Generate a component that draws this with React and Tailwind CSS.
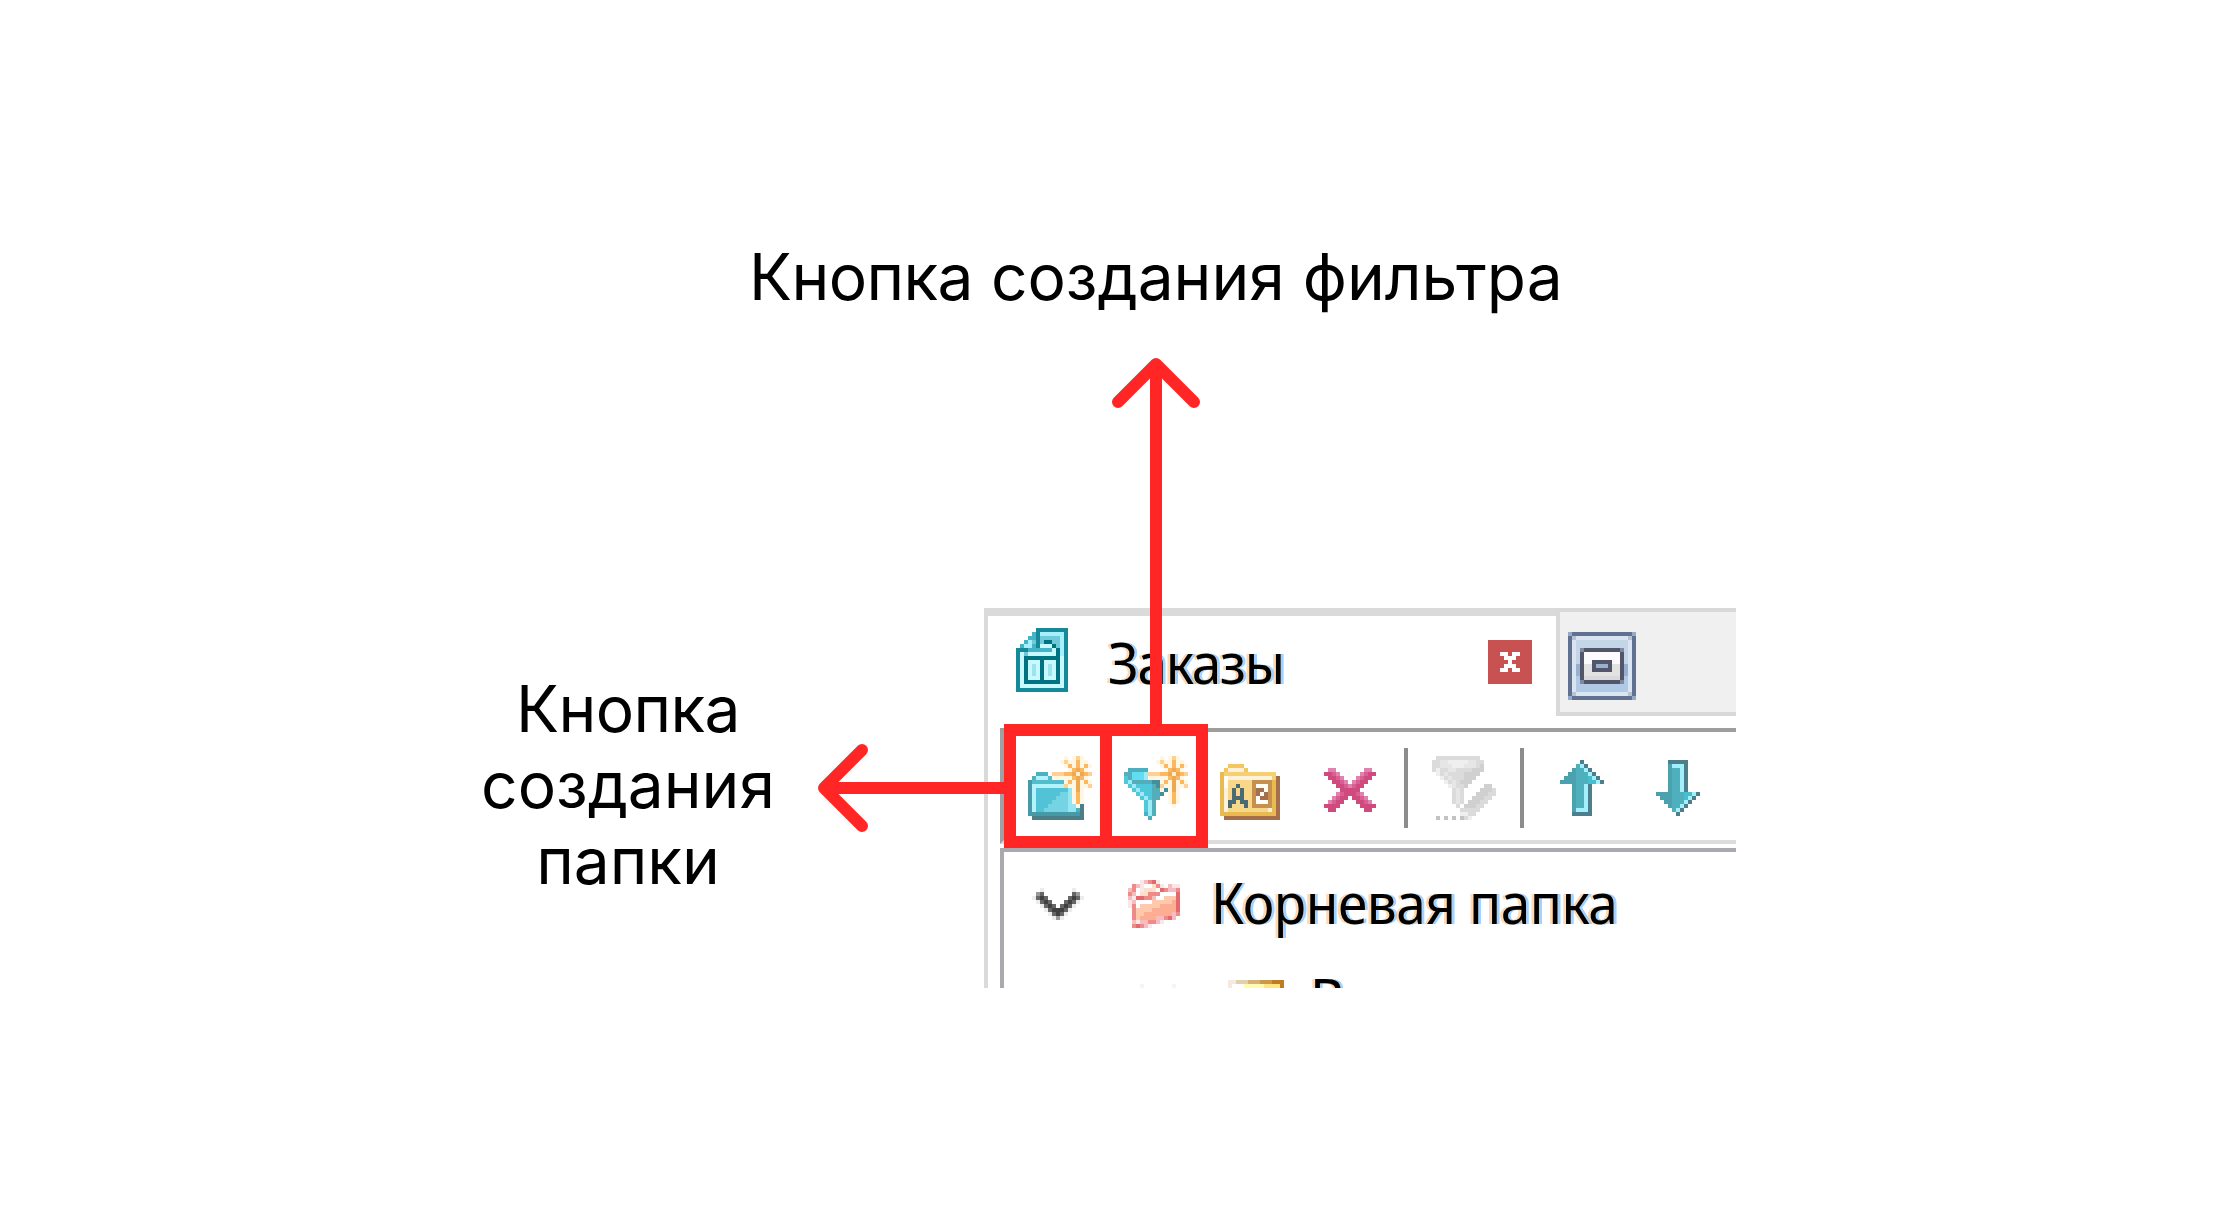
import React from "react";

const STAR = {
  c: "#fff7e4", p: "#ffcf94", o: "#fdb75e", k: "#eda94f", w: "#fdebd5",
};

const DOCUMENT = {
  palette: { D: "#14899a", F: "#007382", L: "#c8f9fe", l: "#a6f0fd", m: "#45b3c6", s: "#6fcad8", i: "#9ae4ef" },
  rows: [
    ".....DDDDDDDD",
    "....mDllllllD",
    "...mmDssssslD",
    "..mlsDsFFsslD",
    ".mllmDLLLFslD",
    "DDDmmmmmmLFlD",
    "DLsLLLLLLLFlD",
    "DLFFFFFFFFFLD",
    "DLFLLLFLLLFLD",
    "DLFLiLFLiLFLD",
    "DLFLiLFLiLFLD",
    "DLFLiLFLiLFLD",
    "DLFLLLFLLLFLD",
    "DLFFFFFFFFFLD",
    "DLLLLLLLLLLLD",
    "DDDDDDDDDDDDD",
  ],
};

const NEW_FOLDER = {
  palette: { ...STAR, D: "#4799a5", T: "#4bb1c0", s: "#52bdce", l: "#b2f3fe", b: "#52c2d7", a: "#74d4e3", h: "#94e6f2", E: "#4c7e88" },
  rows: [
    ".........c.cpc..",
    "........cpccocc.",
    ".........cocococ",
    "..........cokoc.",
    "..TTT.pppookwkop",
    ".Tlllscccccokoc.",
    "Dsssssssscockcoc",
    "Dllllllllpcckccp",
    "Dlbbbbbbbbhckc..",
    "Dlbbbbbbaahcoc..",
    "Dlbbbbbaaahcoc..",
    "Dlbbbbaaaahcoc..",
    "DlbbbaaaaahhcE..",
    "DlbbaaaaaahhTE..",
    "DDDDDDDDDDDDDE..",
    ".EEEEEEEEEEEEE..",
  ],
};

const NEW_FILTER = {
  palette: { ...STAR, T: "#4bafbf", m: "#52b0c0", g: "#56adba", a: "#62dcf0", l: "#9cecf8", b: "#4fc8dc", E: "#438f9d" },
  rows: [
    ".........c.cpc..",
    "........cpccocc.",
    ".........cocococ",
    ".TTTTT....cokoc.",
    "mgaaalpppookwkop",
    "bgaaalcccccokoc.",
    "blgggggEEcockcoc",
    ".blbbbbgEpcckccp",
    "..blbbbggcEckc..",
    "...blbbggE.coc..",
    "....blbgg..coc..",
    ".....blg...coc..",
    ".....blg....c...",
    ".....blg........",
    ".....TlT........",
    "......T.........",
  ],
};

const RENAME_FOLDER = {
  palette: { t: "#f3c75e", Y: "#e9ba4f", U: "#f5d070", w: "#fdf1da", y: "#f8d888", B: "#a56f4c", n: "#c69150", N: "#a56f4c", d: "#4a6a74", x: "#fffdf5" },
  rows: [
    "..tttt.........",
    ".twwwwt........",
    "YUUUUUUUUUUUUU.",
    "YxwwwwwwwwwwwUB",
    "YxyyyyyynnnnnYB",
    "YxyydyyynxxxnYB",
    "YwydydyynNNxnYB",
    "YwydydyynNxNnYB",
    "YwydddyynxNNnYB",
    "YwddyddynxxxnYB",
    "YwdyyydynnnnnYB",
    "YwyyyyyyyyyywYB",
    "YYYYYYYYYYYYYYB",
    ".BBBBBBBBBBBBBB",
  ],
};

const CROSS = {
  palette: { D: "#d04a7e", m: "#d85f92", h: "#e182ae" },
  rows: [
    ".hh.......hh.",
    "DDmh.....hmDD",
    ".DDmh...hmDD.",
    "..DDmh.hmDD..",
    "...DDmhmDD...",
    "....DDDDD....",
    "...hmDDDmh...",
    "..hmDD.DDmh..",
    ".hmDD...DDmh.",
    "DDDD.....DDDD",
    ".DD.......DD.",
  ],
};

const EDIT_FILTER = {
  palette: { q: "#dbdbdb", e: "#e6e6e6", f: "#efefef", d: "#d0d0d0", k: "#c3c3c3" },
  rows: [
    ".qqqqqqqqqqq....",
    "qqeefffffeeqq...",
    "qqeeefffeeeqd...",
    "qfqqeeqqqqddd...",
    ".fqeqqqqdddd....",
    "..fqeqqqddd.....",
    "...fqeqddd......",
    "....feqqd....dd.",
    ".....qeq....dddq",
    ".....qeq...dddqq",
    ".....qeq..dddqq.",
    ".....qeq.dddqq..",
    "......q.dddqq...",
    ".......qqqqq....",
    ".......ffqq.....",
    ".k.k.k.kqf......",
  ],
};

const ARROW_PALETTE = { T: "#4fb0bd", t: "#4ba1ad", E: "#4b7f8b", l: "#a3effb", b: "#47bdd2" };

const UP = {
  palette: ARROW_PALETTE,
  rows: [
    ".....E.....",
    "....TlE....",
    "...tTTlE...",
    "..ttTTTlE..",
    ".tttTTTblE.",
    "ttttTTTbblE",
    "...tTTlE...",
    "...tTTlE...",
    "...tTTlE...",
    "...tTTlE...",
    "...tTTlE...",
    "...tTTlE...",
    "...tlllE...",
    "...EEEEE...",
  ],
};

const DOWN = {
  palette: ARROW_PALETTE,
  rows: [
    "...EEEEE...",
    "...tlllE...",
    "...tTTlE...",
    "...tTTlE...",
    "...tTTlE...",
    "...tTTlE...",
    "...tTTlE...",
    "...tTTlE...",
    "ttttTTTbblE",
    ".tttTTTblE.",
    "..ttTTTlE..",
    "...tTTlE...",
    "....TlE....",
    ".....E.....",
  ],
};

const WINDOW = {
  palette: { O: "#60728f", o: "#92abc9", w: "#dbe5f2", v: "#b8c2d2", a: "#c4d5e8", m: "#98b0cf", b: "#b0cae6", K: "#53566a", k: "#7e899d", x: "#fbfbfd", y: "#e2e2e2", z: "#d9d9d9", c: "#97b1cf" },
  rows: [
    "oOOOOOOOOOOOOOOOo",
    "OvwwwwwwwwwwwwwvO",
    "OwaaaaaaaaaaaaawO",
    "OwaaaaaaaaaaaaawO",
    "OwakKKKKKKKKKkawO",
    "OwaKxxxxxxxxxKawO",
    "OwaKxxxxxxxxxKawO",
    "OwaKxxKKKKKxxKawO",
    "OwmKyyKcccKyyKmwO",
    "OwmKyyKKKKKyyKmwO",
    "OwmKyyyyyyyyyKmwO",
    "OwbKzzzzzzzzzKbwO",
    "OwbkKKKKKKKKKkbwO",
    "OwbbbbbbbbbbbbbwO",
    "OwbbbbbbbbbbbbbwO",
    "OvwwwwwwwwwwwwwvO",
    "oOOOOOOOOOOOOOOOo",
  ],
};

const CLOSE = {
  palette: { X: "#ffffff" },
  rows: ["XX.XX", ".XXX.", "..X..", ".XXX.", "XX.XX"],
};

const ROOT_FOLDER = {
  palette: { D: "#e5686f", m: "#ee8a88", p: "#f5bcc2", c: "#fbe6e8", o: "#ffc9ae", q: "#fdae92", w: "#ffffff", y: "#fde0cc" },
  rows: [
    "...cpmDc.....",
    ".mpcwwymc.pcc",
    "pmwcyyywDmppm",
    "mpwyymmmwwwwD",
    "pcDDmmpwwoooD",
    "cpwwwwoooooqD",
    "cmwoooooqqqqD",
    ".mooooqqqqqqD",
    ".mooqqqqqqqpm",
    ".moqqqqppmDp.",
    ".pcppmmpc....",
    ".mDmpc.......",
  ],
};

const CHEVRON = {
  palette: { c: "#ececec", g: "#9a9a9a", k: "#666666", K: "#404040" },
  rows: [
    "..c.......c..",
    ".gk.......kg.",
    "ckKk.....kKkc",
    ".ckKk...kKkc.",
    "..ckKk.kKkc..",
    "...ckKKKkc...",
    "....ckKkc....",
    ".....cgc.....",
  ],
};

const CHILD_CHEVRON = { palette: { c: "#f5f5f5" }, rows: [".........", "c.......c"] };

const CHILD_FOLDER = {
  palette: { a: "#f3ebe0", b: "#e3cfae", c: "#d5b27c", d: "#c99a4c", e: "#be7d25", w: "#ffffff", x: "#fffbb0", y: "#ffe681" },
  rows: ["aabbbcccdddeee", "awwwxxxxxyyyye"],
};

function Sprite({ art, className = "" }) {
  const cols = art.rows[0].length;
  const cells = [];
  art.rows.forEach((row, y) => {
    let x = 0;
    while (x < row.length) {
      let end = x + 1;
      while (end < row.length && row[end] === row[x]) end += 1;
      if (row[x] !== ".") {
        cells.push(<rect key={`${x}-${y}`} x={x} y={y} width={end - x} height={1} fill={art.palette[row[x]]} />);
      }
      x = end;
    }
  });
  return (
    <svg
      className={`block shrink-0 ${className}`}
      width={cols * 4}
      height={art.rows.length * 4}
      viewBox={`0 0 ${cols} ${art.rows.length}`}
      shapeRendering="crispEdges"
    >
      {cells}
    </svg>
  );
}

const UI_TEXT =
  "block origin-left scale-x-95 whitespace-pre text-[56px] leading-[64px] text-black font-['Noto_Sans',sans-serif] [text-shadow:-3px_0_0_#ffb46480,3px_0_0_#64b4ff99]";

function TabBar() {
  return (
    <div className="flex h-[108px]">
      <div className="flex h-[108px] w-[568px] items-start border-t-8 border-[#dadada] bg-white">
        <Sprite art={DOCUMENT} className="mt-3 ml-7" />
        <span className={`${UI_TEXT} mt-[14px] ml-[40px] w-[380px] tracking-[-1.3px]`}>Заказы</span>
        <button className="mt-6 flex size-11 shrink-0 items-center justify-center bg-[#c85151]">
          <Sprite art={CLOSE} />
        </button>
      </div>
      <div className="h-[108px] w-[180px] border-4 border-r-0 border-[#d9d9d9] bg-[#f0f0f0]">
        <Sprite art={WINDOW} className="mt-5 ml-2" />
      </div>
    </div>
  );
}

function Toolbar() {
  return (
    <div className="mt-3 ml-3 flex h-[116px] items-start border-t-4 border-b-4 border-l-4 border-t-[#9d9d9d] border-b-[#dcdcdc] border-l-[#a0a0a0]">
      <Sprite art={NEW_FOLDER} className="mt-6 ml-6" />
      <Sprite art={NEW_FILTER} className="mt-6 ml-8" />
      <Sprite art={RENAME_FOLDER} className="mt-8 ml-8" />
      <Sprite art={CROSS} className="mt-9 ml-11" />
      <div className="mt-4 ml-7 h-20 w-1 shrink-0 bg-[#8c8c8c]" />
      <Sprite art={EDIT_FILTER} className="mt-6 ml-6" />
      <div className="mt-4 ml-6 h-20 w-1 shrink-0 bg-[#8c8c8c]" />
      <Sprite art={UP} className="mt-7 ml-9" />
      <Sprite art={DOWN} className="mt-7 ml-[52px]" />
    </div>
  );
}

function Tree() {
  return (
    <div className="mt-1 ml-3 h-[140px] overflow-hidden border-t-4 border-l-4 border-[#aaa9b0]">
      <div className="flex h-24 items-start">
        <Sprite art={CHEVRON} className="mt-9 ml-7" />
        <Sprite art={ROOT_FOLDER} className="mt-7 ml-11" />
        <span className={`${UI_TEXT} mt-[18px] ml-[31px] tracking-[-0.5px]`}>Корневая папка</span>
      </div>
      <div className="flex items-start">
        <Sprite art={CHILD_CHEVRON} className="mt-8 ml-[136px]" />
        <Sprite art={CHILD_FOLDER} className="mt-8 ml-[52px]" />
        <span className={`${UI_TEXT} mt-[18px] ml-[26px]`}>В</span>
      </div>
    </div>
  );
}

function Callouts() {
  return (
    <>
      <svg
        className="absolute top-0 left-0"
        width="2216"
        height="1228"
        fill="none"
        stroke="#ff2625"
        strokeWidth="12"
        strokeLinejoin="round"
      >
        <path d="M1156 724V366M1004 788H824" />
        <path d="M1118 402L1156 364L1194 402M862 750L824 788L862 826" strokeLinecap="round" />
      </svg>
      <div className="absolute top-[724px] left-[1004px] h-[124px] w-[108px] border-12 border-[#ff2625]" />
      <div className="absolute top-[724px] left-[1100px] h-[124px] w-[108px] border-12 border-[#ff2625]" />
    </>
  );
}

export default function App() {
  return (
    <main className="relative h-[1228px] w-[2216px] overflow-hidden bg-white font-['Inter',sans-serif] text-[64px] text-black">
      <h1 className="ml-[749px] h-[608px] pt-[239px] leading-[76px] whitespace-nowrap">
        <span className="tracking-[-0.6px]">Кнопка</span> создания фильтра
      </h1>
      <div className="flex">
        <p className="mr-[206px] ml-[478px] w-[300px] pt-[63px] text-center leading-[76px]">
          <span className="tracking-[-0.6px]">Кнопка</span> создания папки
        </p>
        <section className="h-[380px] w-[752px] overflow-hidden border-l-4 border-[#dadada]">
          <TabBar />
          <Toolbar />
          <Tree />
        </section>
      </div>
      <Callouts />
    </main>
  );
}
